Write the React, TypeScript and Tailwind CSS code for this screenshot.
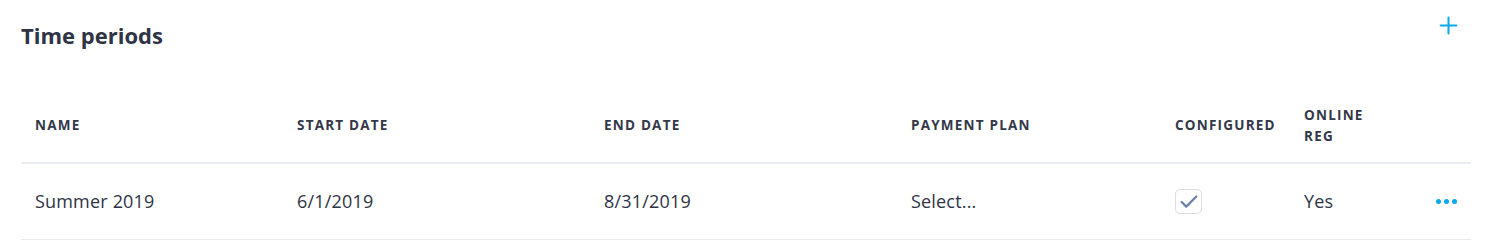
import { Plus, Check } from 'lucide-react'

const COLS = 'grid grid-cols-[262px_307px_307px_264px_129px_134px_47px]'

const HEADERS = ['Name', 'Start date', 'End date', 'Payment plan', 'Configured']

export default function App() {
  return (
    <div className="bg-white pl-[21px] pr-[16px] text-[#2e3345]" style={{ fontFamily: '"Open Sans", Lato, sans-serif' }}>
      {/* Title */}
      <div className="flex h-[89px] items-start justify-between">
        <h2 className="mt-[20px] text-[22px] font-bold leading-[30px]">Time periods</h2>
        <button className="mt-[12px] mr-[9px] text-[#0aa8ec]">
          <Plus className="h-[27px] w-[27px]" strokeWidth={1.8} />
        </button>
      </div>

      {/* Header row */}
      <div className={`${COLS} h-[75px] items-center border-b-2 border-[#e8ebef] text-[13.5px] font-bold uppercase tracking-[0.09em] text-[#333849]`}>
        {HEADERS.map((h) => (
          <div key={h} className="px-[14px]">{h}</div>
        ))}
        <div className="px-[14px] leading-[21px]">Online<br />Reg</div>
        <div />
      </div>

      {/* Data row */}
      <div className={`${COLS} h-[76px] items-center border-b border-[#e8ebef] text-[18px] tracking-[0.01em]`}>
        <div className="px-[14px]">Summer 2019</div>
        <div className="px-[14px]">6/1/2019</div>
        <div className="px-[14px]">8/31/2019</div>
        <div className="px-[14px]">Select...</div>
        <div className="px-[14px]">
          <div className="flex h-[25px] w-[27px] items-center justify-center rounded-[5px] border border-[#dadee4] bg-white">
            <Check className="h-[22px] w-[22px] text-[#6f80a8]" strokeWidth={2.5} />
          </div>
        </div>
        <div className="px-[14px]">Yes</div>
        <div className="flex items-center justify-end gap-[3px] pr-[14px]">
          <span className="h-[5px] w-[5px] rounded-full bg-[#0aa8ec]" />
          <span className="h-[5px] w-[5px] rounded-full bg-[#0aa8ec]" />
          <span className="h-[5px] w-[5px] rounded-full bg-[#0aa8ec]" />
        </div>
      </div>
    </div>
  )
}
